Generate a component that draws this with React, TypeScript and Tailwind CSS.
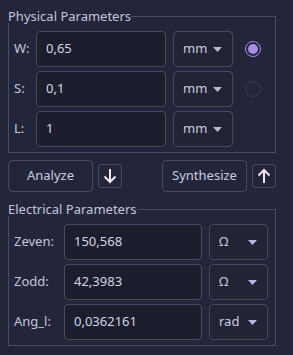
import React from 'react'

const font = { fontFamily: '"Noto Sans", "DejaVu Sans", sans-serif' }

function Caret() {
  return (
    <svg width="9" height="5" viewBox="0 0 9 5" className="shrink-0">
      <path d="M0 0 H9 L4.5 5 Z" fill="#b4bbdc" />
    </svg>
  )
}

function Combo({ value, width }: { value: string; width: string }) {
  return (
    <div
      className={`${width} h-[36px] shrink-0 flex items-center justify-between pl-[9px] pr-[10px] rounded-[4px] border border-[#464a60] bg-[#222436] text-[13px] text-[#c9cce0]`}
    >
      <span>{value}</span>
      <Caret />
    </div>
  )
}

function Field({ value, width }: { value: string; width: string }) {
  return (
    <div
      className={`${width} h-[36px] shrink-0 flex items-center pl-[9px] rounded-[4px] border border-[#464a60] bg-[#1d1e2d] text-[13px] text-[#d2d4e4]`}
    >
      {value}
    </div>
  )
}

function Radio({ on }: { on?: boolean }) {
  return on ? (
    <div className="w-[16px] h-[16px] rounded-full border-[1.5px] border-[#a98ce6] flex items-center justify-center">
      <div className="w-[10px] h-[10px] rounded-full bg-[#a98ce6]" />
    </div>
  ) : (
    <div className="w-[16px] h-[16px] rounded-full border border-[#3c3f52]" />
  )
}

function Group({ title, children }: { title: string; children: React.ReactNode }) {
  return (
    <div className="w-[268px]">
      <div className="flex h-[14px]">
        <span className="text-[13px] leading-[14px] text-[#c3c6da] whitespace-nowrap">{title}</span>
        <div className="flex-1 h-[8px] mt-[7px] border-t border-r border-[#4a4d62]" />
      </div>
      <div className="border-l border-r border-b border-[#4a4d62] pt-[8px] pb-[5px] pl-[5px] flex flex-col gap-[4px]">
        {children}
      </div>
    </div>
  )
}

function ArrowButton({ up }: { up?: boolean }) {
  return (
    <div className="w-[24px] h-[24px] rounded-[3px] border border-[#464a60] flex items-center justify-center">
      <svg width="14" height="16" viewBox="0 0 14 16" className={up ? 'rotate-180' : ''}>
        <path d="M7 1 V14 M1.5 8.5 L7 14 L12.5 8.5" stroke="#f3e8ef" strokeWidth="2" fill="none" />
      </svg>
    </div>
  )
}

function TextButton({ label }: { label: string }) {
  return (
    <div className="w-[85px] h-[32px] rounded-[4px] border border-[#464a60] flex items-center justify-center text-[13px] text-[#c9cce0]">
      {label}
    </div>
  )
}

export default function App() {
  const phys = [
    { l: 'W:', v: '0,65', on: true },
    { l: 'S:', v: '0,1', on: false },
    { l: 'L:', v: '1' },
  ]
  const elec = [
    { l: 'Zeven:', v: '150,568', u: 'Ω' },
    { l: 'Zodd:', v: '42,3983', u: 'Ω' },
    { l: 'Ang_l:', v: '0,0362161', u: 'rad' },
  ]

  return (
    <div className="w-[293px] h-[355px] bg-[#23253a] pl-[8px] pt-[9px]" style={font}>
      <Group title="Physical Parameters">
        {phys.map(r => (
          <div key={r.l} className="flex items-center">
            <span className="w-[22px] text-[13px] text-[#c3c6da]">{r.l}</span>
            <Field value={r.v} width="w-[130px]" />
            <div className="ml-[7px]">
              <Combo value="mm" width="w-[60px]" />
            </div>
            {r.on !== undefined && (
              <div className="ml-[12px]">
                <Radio on={r.on} />
              </div>
            )}
          </div>
        ))}
      </Group>

      <div className="w-[268px] mt-[7px] flex items-center justify-between">
        <div className="flex items-center gap-[5px]">
          <TextButton label="Analyze" />
          <ArrowButton />
        </div>
        <div className="flex items-center gap-[5px]">
          <TextButton label="Synthesize" />
          <ArrowButton up />
        </div>
      </div>

      <div className="mt-[10px]">
        <Group title="Electrical Parameters">
          {elec.map(r => (
            <div key={r.l} className="flex items-center">
              <span className="w-[50px] text-[13px] text-[#c3c6da]">{r.l}</span>
              <Field value={r.v} width="w-[138px]" />
              <div className="ml-[7px]">
                <Combo value={r.u} width="w-[59px]" />
              </div>
            </div>
          ))}
        </Group>
      </div>
    </div>
  )
}
